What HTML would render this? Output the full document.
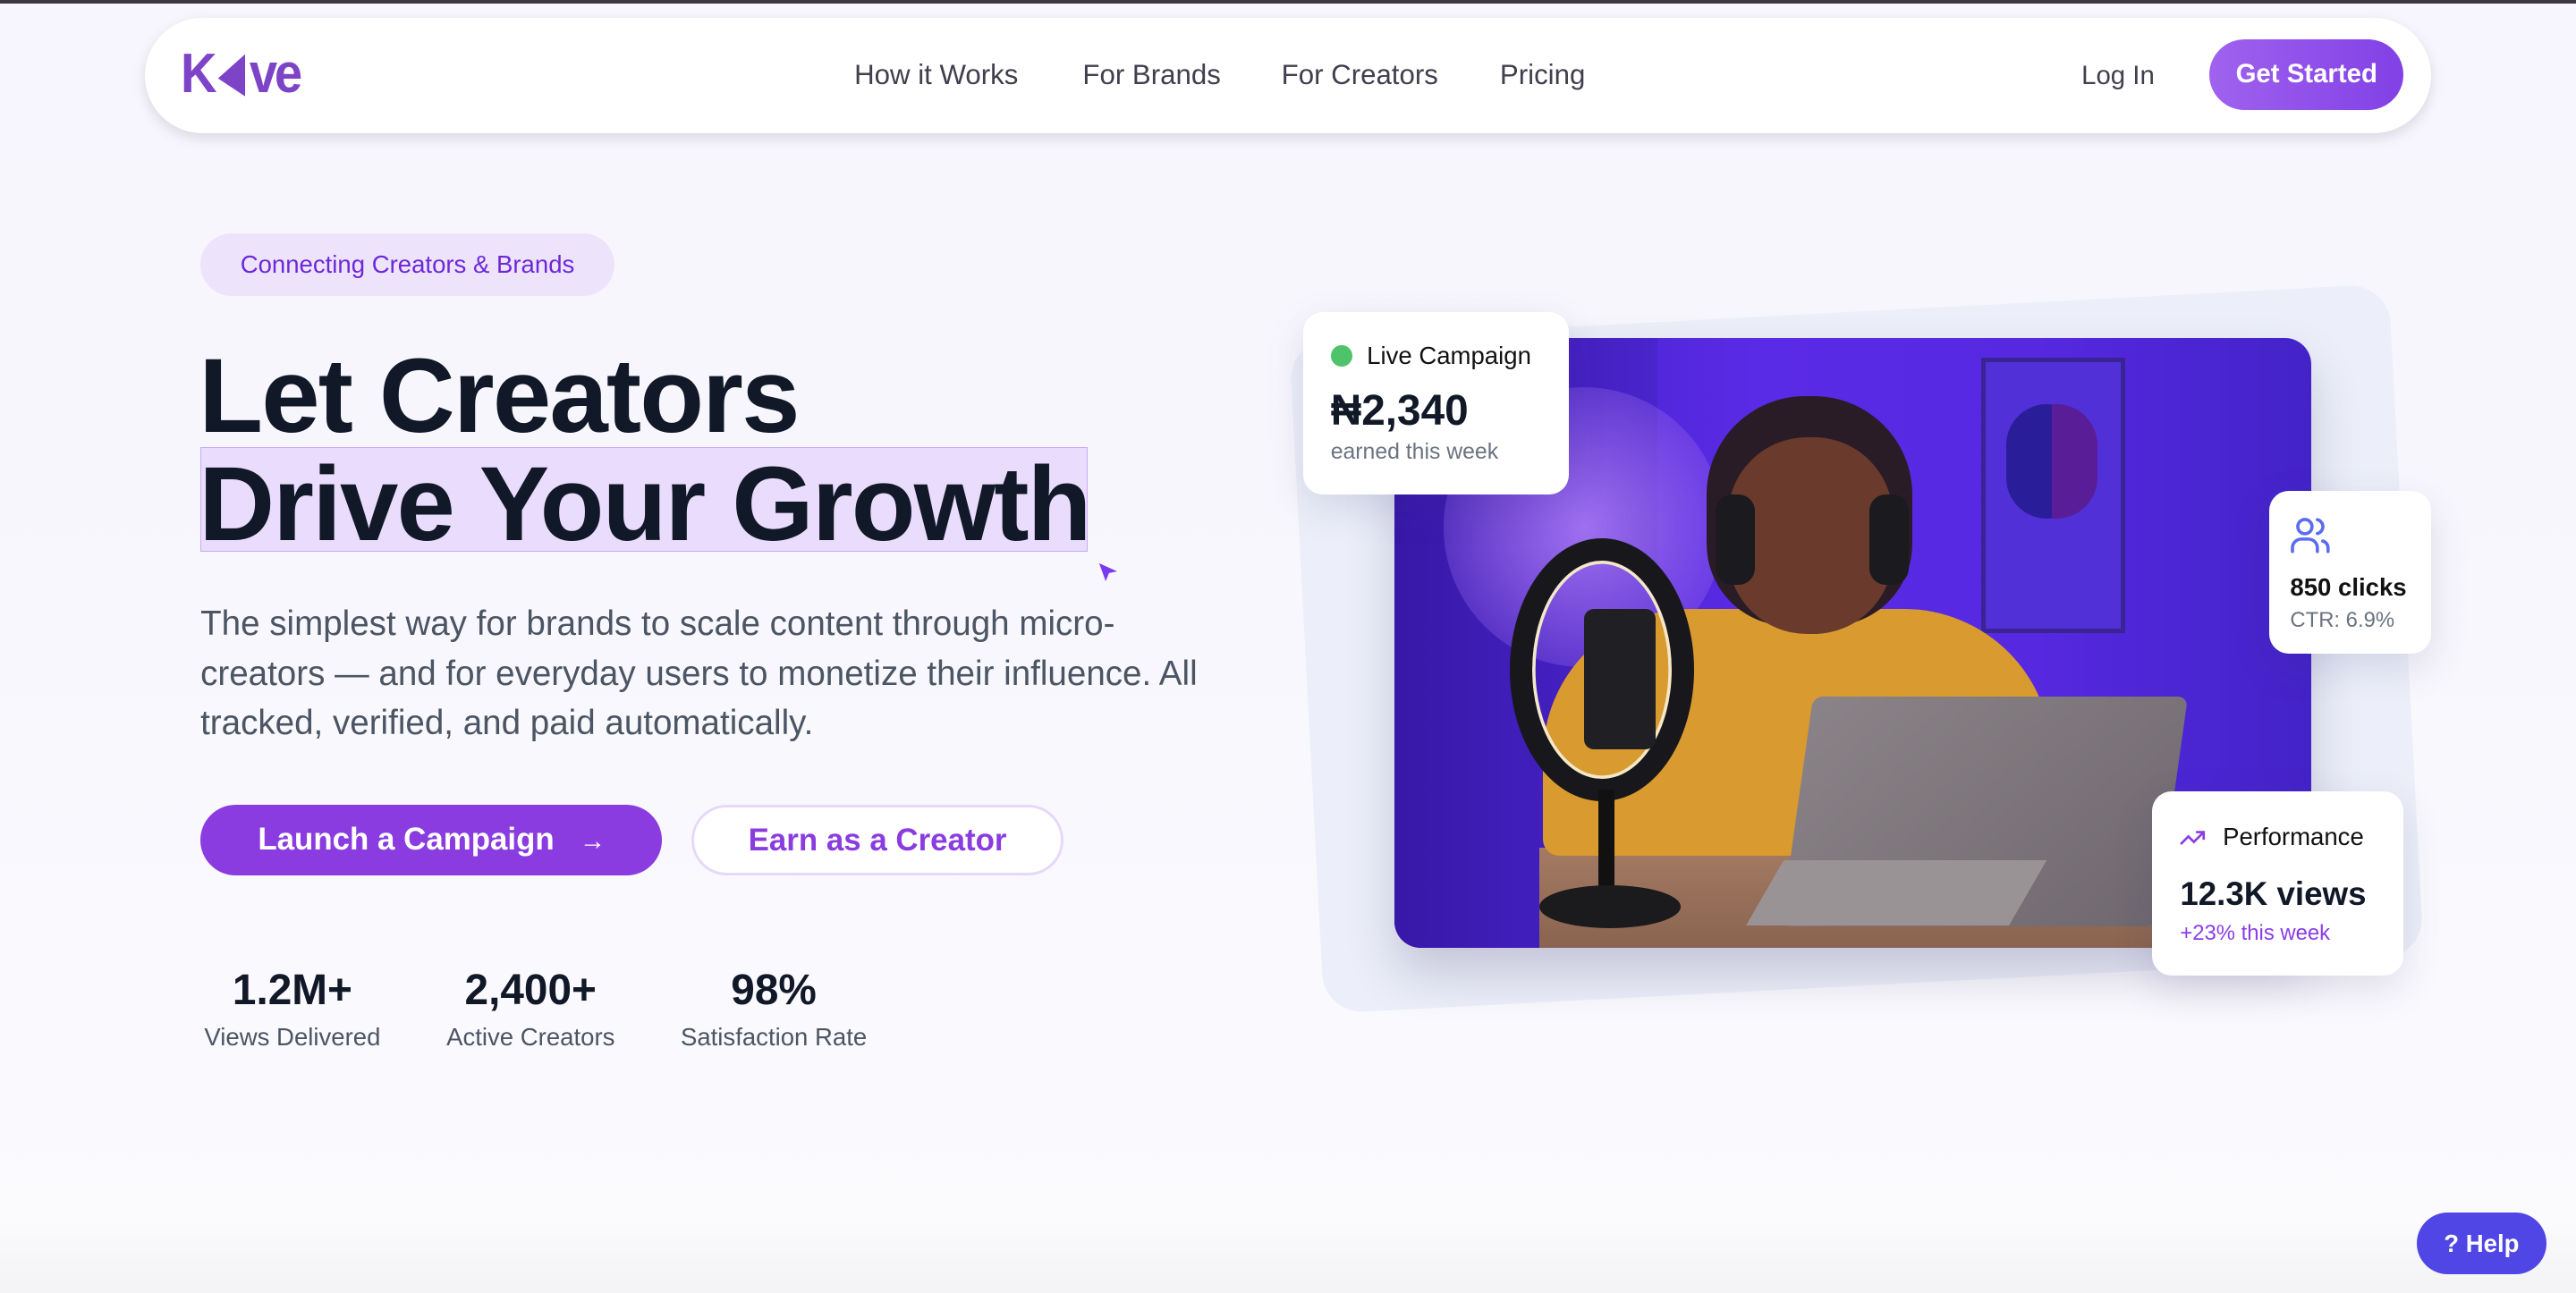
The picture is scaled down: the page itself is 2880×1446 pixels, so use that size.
<!DOCTYPE html>
<html><head><meta charset="utf-8"><style>
html,body{margin:0;padding:0;width:2880px;height:1446px;overflow:hidden;background:#fff}
#w{zoom:1.83673;width:1568px;height:787px;position:relative;overflow:hidden;font-family:"Liberation Sans",sans-serif;
background:linear-gradient(180deg,#f7f5fd 0%,#f8f7fd 50%,#fbfbfe 94.5%,#fafafb 95%,#f3f3f5 100%)}
.abs{position:absolute}
.nav{left:88px;top:11px;width:1392px;height:70px;border-radius:35px;background:#fff;box-shadow:0 3px 8px rgba(0,0,0,.12)}
.nl{top:36px;font-size:17px;color:#3f3f4e}
.card{background:#fff;border-radius:12px;box-shadow:0 8px 24px rgba(60,50,120,.14)}
</style></head><body><div id="w">
<div class="abs" style="left:0;top:0;width:1568px;height:2px;background:#3b3842"></div>
<div class="abs nav"></div>
<div class="abs" style="left:110px;top:26px;font-size:34px;font-weight:bold;color:#7e44c8;letter-spacing:-2px;line-height:38px;transform:scaleX(.9);transform-origin:left">K<svg width="22" height="30" viewBox="0 0 24 30" style="vertical-align:-4px;margin:0 1px"><path d="M22 2 L2 18 L22 30 Z" fill="#7e44c8"/></svg>ve</div>
<div class="abs nl" style="left:520px">How it Works</div>
<div class="abs nl" style="left:659px">For Brands</div>
<div class="abs nl" style="left:780px">For Creators</div>
<div class="abs nl" style="left:913px">Pricing</div>
<div class="abs nl" style="left:1267px;font-size:16px;top:37px">Log In</div>
<div class="abs" style="left:1345px;top:24px;width:118px;height:43px;border-radius:22px;background:linear-gradient(90deg,#a062ee,#8240e6);color:#fff;font-size:16px;font-weight:bold;text-align:center;line-height:43px">Get Started</div>

<div class="abs" style="left:122px;top:142px;width:252px;height:38px;border-radius:19px;background:#ede4fb;color:#6d28d9;font-size:15px;text-align:center;line-height:38px">Connecting Creators &amp; Brands</div>
<div class="abs" style="left:122px;top:272px;width:539px;height:63px;background:#e9dcfc;border:1px solid #c7aaf2"></div>
<div class="abs" style="left:121px;top:208px;font-size:64px;font-weight:bold;color:#111827;line-height:66px;letter-spacing:-1px">Let Creators<br>Drive Your Growth</div>
<svg class="abs" style="left:668px;top:342px" width="14" height="14"><path d="M1 1 L12 6 L7 7 L5 12 Z" fill="#7c3aed"/></svg>
<div class="abs" style="left:122px;top:365px;width:630px;font-size:21px;line-height:30px;color:#4b5563">The simplest way for brands to scale content through micro-creators — and for everyday users to monetize their influence. All tracked, verified, and paid automatically.</div>
<div class="abs" style="left:122px;top:490px;width:281px;height:43px;border-radius:22px;background:#8a3ce0;color:#fff;font-size:19px;font-weight:bold;line-height:43px;text-indent:35px">Launch a Campaign <span style="margin-left:10px;font-weight:normal;font-size:16px">→</span></div>
<div class="abs" style="left:421px;top:490px;width:223px;height:40px;border-radius:22px;border:2px solid #e6d8fb;background:#fff;color:#8a3ce0;font-size:19px;font-weight:bold;line-height:40px;text-align:center">Earn as a Creator</div>
<div class="abs" style="left:122px;top:588px;width:112px;text-align:center"><div style="font-size:26px;font-weight:bold;color:#111827">1.2M+</div><div style="font-size:15px;color:#4b5563;margin-top:5px">Views Delivered</div></div>
<div class="abs" style="left:268px;top:588px;width:110px;text-align:center"><div style="font-size:26px;font-weight:bold;color:#111827">2,400+</div><div style="font-size:15px;color:#4b5563;margin-top:5px">Active Creators</div></div>
<div class="abs" style="left:410px;top:588px;width:122px;text-align:center"><div style="font-size:26px;font-weight:bold;color:#111827">98%</div><div style="font-size:15px;color:#4b5563;margin-top:5px">Satisfaction Rate</div></div>

<div class="abs" style="left:795px;top:190px;width:670px;height:410px;border-radius:24px;background:#eceff9;transform:rotate(-3deg)"></div>
<div class="abs" style="left:849px;top:206px;width:558px;height:371px;border-radius:16px;overflow:hidden;box-shadow:0 16px 30px rgba(40,30,90,.2);background:linear-gradient(90deg,#3f1fc2 0%,#5a2be6 40%,#5628e0 70%,#4323c8 100%)">
 <div class="abs" style="left:0;top:0;width:160px;height:371px;background:linear-gradient(90deg,#3718a8,#4a24cc)"></div>
 <div class="abs" style="left:30px;top:30px;width:170px;height:170px;border-radius:50%;background:radial-gradient(#a070f0,rgba(120,70,230,0))"></div>
 <div class="abs" style="left:357px;top:12px;width:82px;height:162px;border:3px solid #3a2495;background:#5230d8"></div>
 <div class="abs" style="left:372px;top:40px;width:50px;height:70px;border-radius:25px;background:#2a1d9a"></div>
 <div class="abs" style="left:400px;top:40px;width:28px;height:70px;border-radius:0 25px 25px 0;background:#5a1d98"></div>
 <div class="abs" style="left:88px;top:310px;width:470px;height:61px;background:linear-gradient(#a47a62,#8a6450)"></div>
 <div class="abs" style="left:90px;top:165px;width:310px;height:150px;border-radius:90px 90px 10px 10px;background:#d99a30"></div>
 <div class="abs" style="left:190px;top:35px;width:125px;height:140px;border-radius:60px 60px 50px 50px;background:#2a1c26"></div>
 <div class="abs" style="left:203px;top:60px;width:100px;height:120px;border-radius:48px;background:#6a3a2c"></div>
 <div class="abs" style="left:195px;top:95px;width:24px;height:55px;border-radius:10px;background:#1a1a1f"></div>
 <div class="abs" style="left:289px;top:95px;width:24px;height:55px;border-radius:10px;background:#1a1a1f"></div>
 <div class="abs" style="left:70px;top:122px;width:112px;height:160px;border-radius:50%;border:14px solid #18181c;box-sizing:border-box;box-shadow:inset 0 0 0 2px #f3e8c8"></div>
 <div class="abs" style="left:115px;top:165px;width:44px;height:85px;border-radius:6px;background:#202024"></div>
 <div class="abs" style="left:124px;top:275px;width:10px;height:60px;background:#111"></div>
 <div class="abs" style="left:88px;top:333px;width:86px;height:26px;border-radius:50%;background:#1b1b1e"></div>
 <div class="abs" style="left:245px;top:218px;width:228px;height:140px;background:linear-gradient(135deg,#8a8388,#6f686e);transform:skewX(-8deg);border-radius:6px"></div>
 <div class="abs" style="left:225px;top:318px;width:160px;height:40px;background:#9a9396;transform:skewX(-30deg)"></div>
</div>
<div class="abs card" style="left:793px;top:190px;width:162px;height:111px">
 <div class="abs" style="left:17px;top:20px;width:13px;height:13px;border-radius:50%;background:#4fc36a"></div>
 <div class="abs" style="left:39px;top:18px;font-size:15px;color:#111">Live Campaign</div>
 <div class="abs" style="left:17px;top:45px;font-size:26px;font-weight:bold;color:#111827">₦2,340</div>
 <div class="abs" style="left:17px;top:78px;font-size:13.5px;color:#6b7280">earned this week</div>
</div>
<div class="abs card" style="left:1381px;top:299px;width:99px;height:99px">
 <svg class="abs" style="left:12px;top:14px" width="26" height="26" viewBox="0 0 24 24" fill="none" stroke="#5b6cf0" stroke-width="1.8" stroke-linecap="round"><circle cx="9" cy="7" r="4"/><path d="M2 21v-2a5 5 0 0 1 5-5h4a5 5 0 0 1 5 5v2M16 3.1a4 4 0 0 1 0 7.8M22 21v-2a4 4 0 0 0-3-3.9"/></svg>
 <div class="abs" style="left:13px;top:50px;font-size:15px;font-weight:bold;color:#111">850 clicks</div>
 <div class="abs" style="left:13px;top:71px;font-size:13px;color:#6b7280">CTR: 6.9%</div>
</div>
<div class="abs card" style="left:1310px;top:482px;width:153px;height:112px">
 <svg class="abs" style="left:16px;top:20px" width="18" height="16" viewBox="0 0 24 24" fill="none" stroke="#8b3ce6" stroke-width="2.2"><path d="M1 18l7-7 5 5 9-9M15 7h7v7"/></svg>
 <div class="abs" style="left:43px;top:19px;font-size:15px;color:#111">Performance</div>
 <div class="abs" style="left:17px;top:51px;font-size:20px;font-weight:bold;color:#111827">12.3K views</div>
 <div class="abs" style="left:17px;top:79px;font-size:13px;color:#8b3ce6">+23% this week</div>
</div>
<div class="abs" style="left:1471px;top:738px;width:79px;height:38px;border-radius:19px;background:#4f46e5;color:#fff;font-size:15px;font-weight:bold;line-height:38px;text-align:center">? Help</div>
</div></body></html>
